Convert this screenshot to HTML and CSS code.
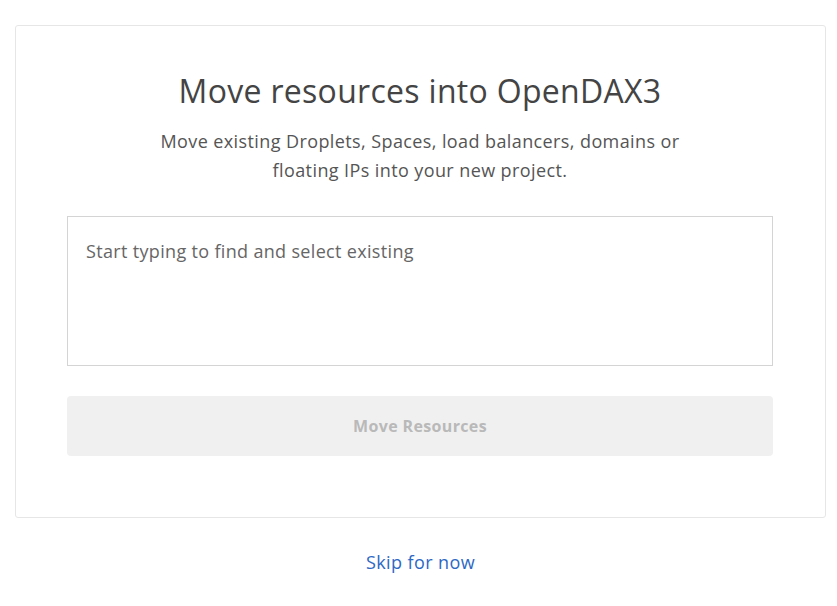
FILE: index.html
```html
<!DOCTYPE html>
<html lang="en">
<head>
  <meta charset="UTF-8">
  <title>Move resources into OpenDAX3</title>
  <link rel="stylesheet" href="styles.css">
</head>
<body>

  <div class="card">
    <h1>Move resources into OpenDAX3</h1>
    <p class="intro">Move existing Droplets, Spaces, load balancers, domains or<br>floating IPs into your new project.</p>

    <div class="picker">Start typing to find and select existing</div>

    <button class="move-btn" disabled>Move Resources</button>
  </div>

  <div class="skip"><a href="#">Skip for now</a></div>

</body>
</html>
```

FILE: styles.css
```css
body { margin: 25px 11px 0 15px; font-family: "Open Sans", Lato, sans-serif; color: #444; background: #fff; }
.card { border: 1px solid #e6e6e6; border-radius: 3px; padding: 45px 52px 61px 51px; text-align: center; }
h1 { font-size: 32px; font-weight: 400; letter-spacing: 0.3px; margin: 0; line-height: 40px; color: #444; }
.intro { font-size: 18px; letter-spacing: 0.4px; line-height: 29px; color: #555; margin: 16px 0 31px; }
.picker { border: 1px solid #d4d4d4; height: 150px; text-align: left; padding: 22px 18px 0; box-sizing: border-box; font-size: 18px; letter-spacing: 0.33px; color: #666; }
.move-btn { display: block; width: 100%; height: 60px; margin-top: 30px; background: #f0f0f0; border: none; border-radius: 4px; font-family: inherit; font-size: 16px; letter-spacing: 0.35px; font-weight: 700; color: #b9b9b9; }
.skip { text-align: center; margin-top: 32px; font-size: 18px; letter-spacing: 0.4px; }
.skip a { color: #2d68c4; text-decoration: none; }
```
